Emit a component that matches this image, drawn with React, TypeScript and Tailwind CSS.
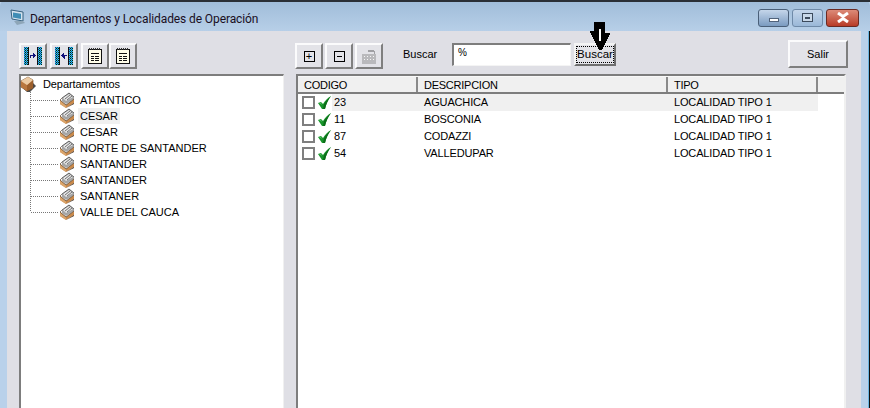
import { ReactNode } from "react";

const departamentos = ["ATLANTICO", "CESAR", "CESAR", "NORTE DE SANTANDER", "SANTANDER", "SANTANDER", "SANTANER", "VALLE DEL CAUCA"];

const localidades = [
  { codigo: "23", descripcion: "AGUACHICA", tipo: "LOCALIDAD TIPO 1" },
  { codigo: "11", descripcion: "BOSCONIA", tipo: "LOCALIDAD TIPO 1" },
  { codigo: "87", descripcion: "CODAZZI", tipo: "LOCALIDAD TIPO 1" },
  { codigo: "54", descripcion: "VALLEDUPAR", tipo: "LOCALIDAD TIPO 1" },
];

// boton clasico con relieve
const RAISED = "border-t-2 border-l-2 border-r-2 border-b-2 border-t-[#fbfbfc] border-l-[#fbfbfc] border-r-[#7f7f7f] border-b-[#7f7f7f]";

function ToolButton({ children, className = "" }: { children: ReactNode; className?: string }) {
  return (
    <div className={`h-[26px] flex items-center justify-center bg-[#e3e3e8] ${RAISED} ${className}`}>
      {children}
    </div>
  );
}

function PaneIcon({ flip }: { flip?: boolean }) {
  return (
    <svg width="20" height="20" viewBox="0 0 20 20" shapeRendering="crispEdges">
      <defs>
        <pattern id="dither" width="2" height="2" patternUnits="userSpaceOnUse">
          <rect width="2" height="2" fill="#22d3e6" />
          <rect width="1" height="1" fill="#111" />
          <rect x="1" y="1" width="1" height="1" fill="#2a3a9a" />
        </pattern>
      </defs>
      <rect x="1" y="1" width="4" height="18" fill="url(#dither)" />
      <rect x="5" y="1" width="1" height="18" fill="#111" />
      <rect x="14" y="1" width="1" height="18" fill="#111" />
      <rect x="15" y="1" width="4" height="18" fill="url(#dither)" />
      {flip ? (
        <path d="M7 9h1V8h1V7h1v2h3v1h-3v2H9v-1H8v-1H7zM10 10h1v3h-1z" fill="#10107a" />
      ) : (
        <path d="M7 9h3V7h1v1h1v1h1v1h-1v1h-1v1h-1v-2H8v2H7z" fill="#10107a" />
      )}
    </svg>
  );
}

function NotesIcon() {
  return (
    <svg width="14" height="16" viewBox="0 0 14 16" shapeRendering="crispEdges">
      <rect x="0.5" y="1.5" width="13" height="14" fill="#fffde8" stroke="#111" />
      <path d="M1 0h1v2H1zM3 0h1v2H3zM5 0h1v2H5zM7 0h1v2H7zM9 0h1v2H9zM11 0h1v2h-1z" fill="#333" />
      <path d="M3 5h8v1H3zM3 8h3v1H3zM7 8h4v1H7zM3 10h3v1H3zM7 10h4v1H7zM3 12h3v1H3zM7 12h4v1H7z" fill="#111" />
    </svg>
  );
}

function BoxIcon({ className = "" }: { className?: string }) {
  return (
    <svg width="17" height="17" viewBox="0 0 17 17" className={className}>
      <path d="M1 10l6 6h3l6-6-3-3z" fill="#4d4d4d" />
      <path d="M1 5l7-4 5 3v8l-6 3-6-4z" fill="#c98f58" stroke="#5a3a1e" strokeWidth="0.6" />
      <path d="M1 5l6 4v6l-6-4z" fill="#b9773f" />
      <path d="M7 9l6-5v8l-6 3z" fill="#9c5f2c" />
      <path d="M1 5l7-4 5 3-6 5z" fill="#eccba4" />
    </svg>
  );
}

function ItemIcon() {
  return (
    <svg width="16" height="16" viewBox="0 0 16 16" className="shrink-0">
      <path d="M1 8l6 5 8-6v4l-8 5-6-4z" fill="#c98a4c" />
      <path d="M1 8l6 5v3l-6-4z" fill="#dba56b" />
      <path d="M7 16l8-5v1l-8 4z" fill="#3c2a1a" />
      <path d="M3 6l7-5 5 4v2l-8 5-4-3z" fill="#a5a5a5" />
      <path d="M4 6l6-4 4 3-7 4z" fill="#e6e6e6" />
      <path d="M6 7l5-4M8 8l5-4" stroke="#555" strokeWidth="0.8" />
      <path d="M3 6l7-5 5 4" fill="none" stroke="#333" strokeWidth="0.7" />
      <path d="M1 8l2-2M1 8l6 5 8-6" fill="none" stroke="#3c2a1a" strokeWidth="0.6" />
    </svg>
  );
}

function Check() {
  return (
    <svg width="13" height="14" viewBox="0 0 13 14" className="shrink-0 ml-[3px]">
      <path d="M0 7l3-1 2 2c2-3 4-6 8-8-3 4-5 8-6 13H4z" fill="#17952a" />
      <path d="M5 13l1-5c2-3 4-5 7-8-3 4-5 8-6 13z" fill="#0b6d18" />
      <path d="M1 7l2 0 1 2z" fill="#55c465" />
    </svg>
  );
}

function TreeRow({ name, last, index }: { name: string; last: boolean; index: number }) {
  return (
    <div className="flex items-center h-4">
      <svg width="38" height="16" viewBox="0 0 38 16" className="shrink-0" shapeRendering="crispEdges">
        <path d={last ? "M9.5 0v8" : "M9.5 0v16"} stroke="#777" strokeDasharray="1 1" />
        <path d="M10 8.5h28" stroke="#777" strokeDasharray="1 1" />
      </svg>
      <ItemIcon />
      <span className={`ml-[3px] h-4 px-[2px] leading-4 ${index === 1 ? "bg-[#f0f0f0]" : ""}`}>{name}</span>
    </div>
  );
}

export default function App() {
  return (
    <div className="w-[870px] h-[408px] overflow-hidden flex flex-col bg-[#b9d1ea] font-['Liberation_Sans',sans-serif] text-[11px] text-black">
      {/* titulo */}
      <div className="h-[31px] shrink-0 flex flex-col bg-gradient-to-b from-[#9fbcd8] to-[#b7cfe8] rounded-t-md">
        <div className="h-[2px] bg-[#2a2f35]" />
        <div className="flex-1 flex items-center pl-[10px] pr-[11px]">
          <svg width="16" height="17" viewBox="0 0 16 17" className="shrink-0 mt-[2px]">
            <path d="M1 1l12 2v9L2 10z" fill="#d4e3ef" stroke="#37617f" />
            <path d="M3 3.500l8 1.300v5.200L3 8.500z" fill="#3f8db5" />
            <path d="M4 12l9 0 2 2-8 2z" fill="#8ea6b8" />
          </svg>
          <span className="ml-[4px] font-['Roboto',sans-serif] text-[12px] tracking-[-0.1px] text-[#1a0f1f] mt-[4px]">Departamentos y Localidades de Operación</span>
          <div className="ml-auto flex items-start gap-[3px] mt-[2px]">
            <div className="w-[31px] h-[18px] rounded-[3px] border border-[#4a5f78] bg-gradient-to-b from-[#c5d6ea] to-[#7b9bc0] flex items-center justify-center">
              <div className="w-[10px] h-[4px] mt-[5px] bg-white border border-[#50627a]" />
            </div>
            <div className="w-[31px] h-[18px] rounded-[3px] border border-[#6f8aa8] bg-gradient-to-b from-[#c5d6ea] to-[#9ab8d8] flex items-center justify-center">
              <div className="w-[11px] h-[9px] border border-[#3c4a5c] bg-[#c9d8e8] flex items-center justify-center">
                <div className="w-[5px] h-[2px] bg-[#3c4a5c]" />
              </div>
            </div>
            <div className="w-[33px] h-[18px] rounded-[3px] border border-[#6b2a22] bg-gradient-to-b from-[#dc8a78] to-[#b83a26] flex items-center justify-center">
              <svg width="14" height="11" viewBox="0 0 14 11">
                <path d="M2 1l5 3.500L12 1M2 10l5-3.500L12 10" stroke="#fff" strokeWidth="3" fill="none" />
              </svg>
            </div>
          </div>
        </div>
      </div>

      {/* cuerpo */}
      <div className="flex-1 flex min-h-0">
        <div className="w-[7px] shrink-0 bg-[#b9d1ea]" />
        <div className="flex-1 bg-[#dfdfe5] flex pl-[12px] pr-[15px] min-h-0">
          {/* arbol */}
          <div className="w-[265px] shrink-0 flex flex-col pt-[12px]">
            <div className="flex h-[26px]">
              <ToolButton className="w-[28px]"><PaneIcon /></ToolButton>
              <ToolButton className="w-[28px] ml-[3px]"><PaneIcon flip /></ToolButton>
              <ToolButton className="w-[28px] ml-[3px]"><NotesIcon /></ToolButton>
              <ToolButton className="w-[28px]"><NotesIcon /></ToolButton>
            </div>
            <div className="mt-[5px] flex-1 bg-white border-t-2 border-l-2 border-r border-[#7d7d7d] border-r-[#f0f0f0]">
              <div className="flex items-center h-[17px]">
                <BoxIcon className="shrink-0 -ml-[1px]" />
                <span className="ml-[6px] tracking-[-0.1px]">Departamemtos</span>
              </div>
              <div className="-mt-[1px]">
                {departamentos.map((d, i) => (
                  <TreeRow key={i} name={d} index={i} last={i === departamentos.length - 1} />
                ))}
              </div>
            </div>
          </div>

          {/* lista */}
          <div className="ml-[12px] flex-1 flex flex-col pt-[9px] min-w-0">
            <div className="h-[31px] flex items-start -ml-px">
              <div className="flex mt-[3px]">
                <ToolButton className="w-[28px]">
                  <div className="w-[11px] h-[11px] border border-black flex items-center justify-center text-[11px] leading-none">+</div>
                </ToolButton>
                <ToolButton className="w-[28px] ml-[2px]">
                  <div className="w-[11px] h-[11px] border border-black flex items-center justify-center">
                    <div className="w-[5px] h-px bg-black" />
                  </div>
                </ToolButton>
                <ToolButton className="w-[28px] ml-[2px]">
                  <svg width="18" height="18" viewBox="0 0 18 18" shapeRendering="crispEdges">
                    <rect x="2" y="7" width="14" height="10" fill="#b9b9bc" />
                    <path d="M4 9h1v1H4zM7 9h1v1H7zM10 9h1v1h-1zM13 9h1v1h-1zM4 12h1v1H4zM7 12h1v1H7zM10 12h1v1h-1zM13 12h1v1h-1z" fill="#f5f5f5" />
                    <path d="M8 3h6v1h1v3h-1V5H8z" fill="#a0a0a4" />
                  </svg>
                </ToolButton>
              </div>
              <span className="ml-[20px] w-[34px] mt-[8px] leading-[13px]">Buscar</span>
              <div className="ml-[15px] mt-[3px] w-[119px] h-[23px] bg-white border-t-2 border-l-2 border-r border-b border-t-[#7d7d7d] border-l-[#7d7d7d] border-r-[#f4f4f4] border-b-[#f4f4f4] pl-[4px] text-[10px] leading-[15px]">
                %
              </div>
              <div className="relative ml-[3px] mt-[3px] w-[42px] h-[23px] bg-[#e3e3e8] border-t-2 border-l-2 border-r-2 border-b-2 border-t-[#f4f4f4] border-l-[#f4f4f4] border-r-[#6f6f6f] border-b-[#6f6f6f] flex items-center justify-center">
                <div className="w-[38px] h-[17px] border border-dotted border-black flex items-center justify-center text-[11.500px] leading-none">Buscar</div>
                <svg width="20" height="28" viewBox="0 0 20 28" className="absolute left-[14px] -top-[23px]" shapeRendering="crispEdges">
                  <path d="M4 0h11v11h5v2h-1v2h-1v2h-1v2h-1v2h-1v2h-1v2h-1v2h-1v1H9v-1H8v-2H7v-2H6v-2H5v-2H4v-2H3v-2H2v-2H1v-2H0v-2h4z" fill="#000" />
                  <path d="M9 7h2v12H9z" fill="#fff" />
                </svg>
              </div>
              <ToolButton className="ml-auto mr-[-2px] w-[60px] h-[28px]">
                <span>Salir</span>
              </ToolButton>
            </div>

            <div className="mt-[3px] flex-1 bg-white border-t-2 border-l-2 border-r-2 border-[#7d7d7d] border-r-[#f0f0f0] flex flex-col">
              <div className="h-[18px] shrink-0 flex bg-[#f0f0f0] border-t border-[#f8f8f8] border-b-2 border-b-[#7d7d7d] tracking-[-0.25px] leading-[16px]">
                <div className="w-[120px] pl-[6px] border-r-2 border-[#8a8a8a]">CODIGO</div>
                <div className="w-[250px] pl-[6px] border-r-2 border-[#8a8a8a]">DESCRIPCION</div>
                <div className="w-[150px] pl-[6px] border-r-2 border-[#8a8a8a]">TIPO</div>
                <div className="flex-1" />
              </div>
              {localidades.map((l, i) => (
                <div key={l.codigo} className="flex items-center h-[17px] tracking-[-0.15px] shrink-0">
                  <div className="w-[13px] h-[13px] ml-[4px] bg-white border-2 border-[#7f7f7f] shrink-0" />
                  <Check />
                  <div className={`flex items-center h-[17px] w-[486px] ml-[1px] ${i === 0 ? "bg-[#f0f0f0]" : ""}`}>
                    <span className="w-[92px] pl-[2px]">{l.codigo}</span>
                    <span className="w-[250px]">{l.descripcion}</span>
                    <span>{l.tipo}</span>
                  </div>
                </div>
              ))}
            </div>
          </div>
        </div>
        <div className="w-[8px] shrink-0 bg-[#b9d1ea] border-r border-r-[#6ab4e0]" />
        <div className="w-px shrink-0 bg-[#111]" />
      </div>
    </div>
  );
}
